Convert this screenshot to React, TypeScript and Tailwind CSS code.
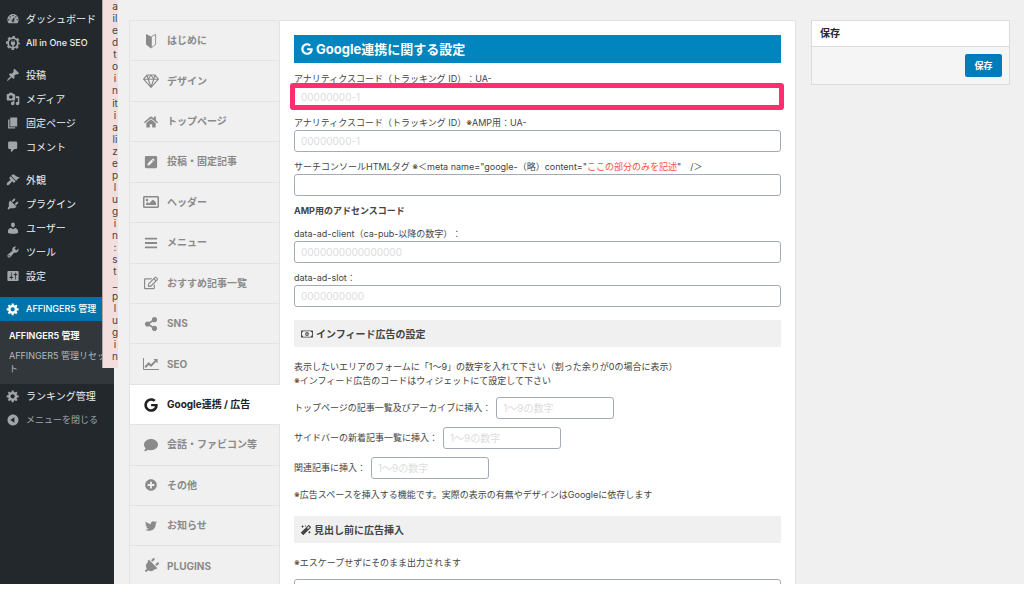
import React from 'react';
import {
  FaBars,
  FaComment,
  FaGoogle,
  FaHome,
  FaMagic,
  FaPenSquare,
  FaPlug,
  FaPlusCircle,
  FaRegEdit,
  FaRegImage,
  FaRegMoneyBillAlt,
  FaShareAlt,
  FaTwitter,
} from 'react-icons/fa';

interface MenuItem {
  label: string;
  path: string;
}

interface Tab {
  label: string;
  icon: React.ReactNode;
  active?: boolean;
}

const icons = {
  dashboard:
    'M3.76 16h12.48c1.1-1.37 1.76-3.11 1.76-5 0-4.42-3.58-8-8-8s-8 3.58-8 8c0 1.89.66 3.63 1.76 5zM10 4c.55 0 1 .45 1 1s-.45 1-1 1-1-.45-1-1 .45-1 1-1zM6 6c.55 0 1 .45 1 1s-.45 1-1 1-1-.45-1-1 .45-1 1-1zm8 0c.55 0 1 .45 1 1s-.45 1-1 1-1-.45-1-1 .45-1 1-1zm-5.37 5.55L12 7v6c0 1.1-.9 2-2 2s-2-.9-2-2c0-.57.24-1.08.63-1.45zM4 10c.55 0 1 .45 1 1s-.45 1-1 1-1-.45-1-1 .45-1 1-1zm12 0c.55 0 1 .45 1 1s-.45 1-1 1-1-.45-1-1 .45-1 1-1zm-5 3c0-.55-.45-1-1-1s-1 .45-1 1 .45 1 1 1 1-.45 1-1z',
  post: 'M10.44 3.02l1.82-1.82 6.36 6.35-1.83 1.82c-1.05-.68-2.48-.57-3.41.36l-.75.75c-.92.93-1.04 2.35-.35 3.41l-1.83 1.82-2.41-2.41-2.8 2.79c-.42.42-3.38 2.71-3.8 2.29s1.86-3.39 2.28-3.81l2.79-2.79L4.1 9.36l1.83-1.82c1.05.69 2.48.57 3.4-.36l.75-.75c.93-.92 1.05-2.35.36-3.41z',
  media:
    'M13 11V4c0-.55-.45-1-1-1h-1.67L9 1H5L3.67 3H2c-.55 0-1 .45-1 1v7c0 .55.45 1 1 1h10c.55 0 1-.45 1-1zM7 4.5c1.38 0 2.5 1.12 2.5 2.5S8.38 9.5 7 9.5 4.5 8.38 4.5 7 5.62 4.5 7 4.5zM14 6h5v10.5c0 1.38-1.12 2.5-2.5 2.5S14 17.88 14 16.5s1.12-2.5 2.5-2.5c.17 0 .34.02.5.05V9h-3V6zm-4 8.05V13h2v3.5c0 1.38-1.12 2.5-2.5 2.5S7 17.88 7 16.5 8.12 14 9.5 14c.17 0 .34.02.5.05z',
  page: 'M6 15V2h10v13H6zm-1 1h8v2H3V5h2v11z',
  comments: 'M5 2h9c1.1 0 2 .9 2 2v7c0 1.1-.9 2-2 2h-2l-5 5v-5H5c-1.1 0-2-.9-2-2V4c0-1.1.9-2 2-2z',
  appearance:
    'M14.48 11.06L7.41 3.99l1.5-1.5c.5-.56 2.3-.47 3.51.32 1.21.8 1.43 1.28 2.91 2.1 1.18.64 2.45 1.26 4.45.85zm-.71.71L6.7 4.7 4.93 6.47c-.39.39-.39 1.02 0 1.41l1.06 1.06c.39.39.39 1.03 0 1.42-.6.6-1.43 1.11-2.21 1.69-.35.26-.7.53-1.01.84C1.43 14.23.4 16.08 1.4 17.07c.99 1 2.84-.03 4.18-1.36.31-.31.58-.66.85-1.02.57-.78 1.08-1.61 1.69-2.21.39-.39 1.02-.39 1.41 0l1.06 1.06c.39.39 1.02.39 1.41 0z',
  plugins:
    'M13.11 4.36L9.87 7.6 8 5.73l3.24-3.24c.35-.34 1.05-.2 1.56.32.52.51.66 1.21.31 1.55zm-8 1.77l.91-1.12 9.01 9.01-1.19.84c-.71.71-2.63 1.16-3.82 1.16H6.14L4.9 17.26c-.59.59-1.54.59-2.12 0-.59-.58-.59-1.53 0-2.12l1.24-1.24v-3.88c0-1.13.4-3.19 1.09-3.89zm7.26 3.97l3.24-3.24c.34-.35 1.04-.21 1.55.31.52.51.66 1.21.31 1.55l-3.24 3.25z',
  users:
    'M10 9.25c-2.27 0-2.73-3.44-2.73-3.44C7 4.02 7.82 2 9.97 2c2.16 0 2.98 2.02 2.71 3.81 0 0-.41 3.44-2.68 3.44zm0 2.57L12.72 10c2.39 0 4.52 2.33 4.52 4.53v2.49s-3.65 1.13-7.24 1.13c-3.65 0-7.24-1.13-7.24-1.13v-2.49c0-2.25 1.94-4.48 4.47-4.48z',
  tools:
    'M16.68 9.77c-1.34 1.34-3.3 1.67-4.95.99l-5.41 6.52c-.99.99-2.59.99-3.58 0s-.99-2.59 0-3.57l6.52-5.42c-.68-1.65-.35-3.61.99-4.95 1.28-1.28 3.12-1.62 4.72-1.06l-2.89 2.89 2.82 2.82 2.86-2.87c.53 1.58.18 3.39-1.08 4.65zM3.81 16.21c.4.39 1.04.39 1.43 0 .4-.4.4-1.04 0-1.43-.39-.4-1.03-.4-1.43 0-.39.39-.39 1.03 0 1.43z',
  settings:
    'M18 16V4c0-.55-.45-1-1-1H3c-.55 0-1 .45-1 1v12c0 .55.45 1 1 1h14c.55 0 1-.45 1-1zM8 11h1c.55 0 1 .45 1 1s-.45 1-1 1H8v1.5c0 .28-.22.5-.5.5s-.5-.22-.5-.5V13H6c-.55 0-1-.45-1-1s.45-1 1-1h1V5.5c0-.28.22-.5.5-.5s.5.22.5.5V11zm5-2h-1c-.55 0-1-.45-1-1s.45-1 1-1h1V5.5c0-.28.22-.5.5-.5s.5.22.5.5V7h1c.55 0 1 .45 1 1s-.45 1-1 1h-1v5.5c0 .28-.22.5-.5.5s-.5-.22-.5-.5V9z',
  generic:
    'M18 12h-2.18c-.17.7-.44 1.35-.81 1.93l1.54 1.54-2.1 2.1-1.54-1.54c-.58.36-1.23.63-1.91.79V19H8v-2.18c-.68-.16-1.33-.43-1.91-.79l-1.54 1.54-2.12-2.12 1.54-1.54c-.36-.58-.63-1.23-.79-1.91H1V9.03h2.17c.16-.7.44-1.35.8-1.94L2.43 5.55l2.1-2.1 1.54 1.54c.58-.37 1.24-.64 1.93-.81V2h3v2.18c.68.16 1.33.43 1.91.79l1.54-1.54 2.12 2.12-1.54 1.54c.36.59.64 1.24.8 1.94H18V12zm-8.5 1.5c1.66 0 3-1.34 3-3s-1.34-3-3-3-3 1.34-3 3 1.34 3 3 3z',
  collapse:
    'M10 2.16c4.33 0 7.84 3.51 7.84 7.84s-3.51 7.84-7.84 7.84S2.16 14.33 2.16 10 5.71 2.16 10 2.16zm2 11.72V6.12L6.18 9.97z',
};

const contentMenu: MenuItem[] = [
  { label: '投稿', path: icons.post },
  { label: 'メディア', path: icons.media },
  { label: '固定ページ', path: icons.page },
  { label: 'コメント', path: icons.comments },
];

const adminMenu: MenuItem[] = [
  { label: '外観', path: icons.appearance },
  { label: 'プラグイン', path: icons.plugins },
  { label: 'ユーザー', path: icons.users },
  { label: 'ツール', path: icons.tools },
  { label: '設定', path: icons.settings },
];

// The notice is squeezed so narrow that it wraps after every letter or two
const noticeLines = [
  'a', 'il', 'e', 'd', 't', 'o', 'i', 'n', 'it', 'i', 'a', 'li', 'z', 'e', 'p',
  'l', 'u', 'g', 'i', 'n', ':', 's', 't', '_', 'p', 'l', 'u', 'g', 'i', 'n',
];

const DashIcon = ({ path }: { path: string }) => (
  <svg viewBox="0 0 20 20" className="size-3.5 shrink-0" fill="currentColor" fillRule="evenodd" aria-hidden="true">
    <path d={path} />
  </svg>
);

const SeoGearIcon = () => (
  <svg viewBox="0 0 20 20" className="size-3.5 shrink-0" fill="none" stroke="currentColor" aria-hidden="true">
    <circle cx="10" cy="10" r="7" strokeWidth="2.6" />
    <circle cx="10" cy="10" r="8.8" strokeWidth="2.4" strokeDasharray="3.8 3.11" strokeDashoffset="1.9" />
    <path d="M7 8.5h6v2.2a3 3 0 0 1-2 2.6v2.5H9v-2.5a3 3 0 0 1-2-2.6z" fill="currentColor" stroke="none" />
    <path d="M8.5 9V6.3M11.5 9V6.3" strokeWidth="1.3" />
  </svg>
);

const BeginnerIcon = () => (
  <svg viewBox="0 0 16 16" className="size-4" aria-hidden="true">
    <path d="M3 1l5 2.5v12L3 11.5z" fill="currentColor" />
    <path d="M8.4 3.6L12.6 1.4v9.9L8.4 14.8z" fill="none" stroke="currentColor" strokeWidth="0.9" />
  </svg>
);

const DiamondIcon = () => (
  <svg viewBox="0 0 16 16" className="size-4" fill="none" stroke="currentColor" strokeWidth="1.1" strokeLinejoin="round" aria-hidden="true">
    <path d="M4 2h8l3.4 4.2L8 14.4.6 6.2zM.8 6.2h14.4M4 2l1.2 4.2L8 14l2.8-7.8L12 2M5.2 6.2L8 2l2.8 4.2" />
  </svg>
);

const ChartIcon = () => (
  <svg viewBox="0 0 16 16" className="size-4" fill="none" stroke="currentColor" aria-hidden="true">
    <path d="M.5 2v11.5H16" strokeWidth="1" />
    <path d="M2.2 11.2l3.6-3.7 2.2 2.2 4.8-4.8" strokeWidth="2" />
    <path d="M10.4 3h4.2v4.2z" fill="currentColor" stroke="none" />
  </svg>
);

const tabs: Tab[] = [
  { label: 'はじめに', icon: <BeginnerIcon /> },
  { label: 'デザイン', icon: <DiamondIcon /> },
  { label: 'トップページ', icon: <FaHome /> },
  { label: '投稿・固定記事', icon: <FaPenSquare /> },
  { label: 'ヘッダー', icon: <FaRegImage className="size-4" /> },
  { label: 'メニュー', icon: <FaBars /> },
  { label: 'おすすめ記事一覧', icon: <FaRegEdit /> },
  { label: 'SNS', icon: <FaShareAlt /> },
  { label: 'SEO', icon: <ChartIcon /> },
  { label: 'Google連携 / 広告', icon: <FaGoogle />, active: true },
  { label: '会話・ファビコン等', icon: <FaComment /> },
  { label: 'その他', icon: <FaPlusCircle className="size-3" /> },
  { label: 'お知らせ', icon: <FaTwitter className="size-3" /> },
  { label: 'PLUGINS', icon: <FaPlug className="size-4 rotate-45" /> },
];

const MenuLink = ({ label, path }: MenuItem) => (
  <a href="#" className="flex h-6 items-center gap-1.5 pl-1.5 whitespace-nowrap text-[#eee]">
    <span className="text-[#a0a5aa]">
      <DashIcon path={path} />
    </span>
    {label}
  </a>
);

const inputClass =
  'block h-[22px] rounded-[3px] border border-[#a5abb5] bg-white px-1.5 text-[10px] leading-4 text-[#444] outline-none placeholder:text-[#dcdcdc]';

interface FieldProps {
  id: string;
  label: React.ReactNode;
  placeholder?: string;
  highlight?: boolean;
}

const Field = ({ id, label, placeholder, highlight }: FieldProps) => (
  <div>
    <label htmlFor={id} className="block h-3.5 whitespace-nowrap">
      {label}
    </label>
    <div className="relative">
      <input id={id} type="text" placeholder={placeholder} className={`${inputClass} w-full`} />
      {highlight && (
        <div className="pointer-events-none absolute -top-[3px] -right-[3px] -bottom-[2px] -left-1 rounded-[3px] border-[5px] border-[#ff2e6f]" />
      )}
    </div>
  </div>
);

const InlineField = ({ id, label }: { id: string; label: string }) => (
  <div className="flex items-center gap-[5px]">
    <label htmlFor={id} className="whitespace-nowrap">
      {label}
    </label>
    <input id={id} type="text" placeholder="1〜9の数字" className={`${inputClass} w-[118px]`} />
  </div>
);

const SectionTitle = ({ icon, children }: { icon: React.ReactNode; children: React.ReactNode }) => (
  <h3 className="flex h-[27px] items-center gap-[3px] bg-[#f0f0f0] px-[7px] text-[10px] font-bold">
    {icon}
    {children}
  </h3>
);

const Sidebar = () => (
  <nav className="w-[114px] shrink-0 bg-[#23282d] pt-[7px] text-[10px] leading-4">
    <MenuLink label="ダッシュボード" path={icons.dashboard} />
    <a href="#" className="flex h-6 items-center gap-1.5 pl-1.5 text-[9px] font-medium whitespace-nowrap text-[#eee]">
      <span className="text-[#a0a5aa]">
        <SeoGearIcon />
      </span>
      All in One SEO
    </a>
    <div className="mt-2">
      {contentMenu.map((item) => (
        <MenuLink key={item.label} {...item} />
      ))}
    </div>
    <div className="mt-[9px]">
      {adminMenu.map((item) => (
        <MenuLink key={item.label} {...item} />
      ))}
    </div>
    <div className="mt-[9px]">
      <a href="#" className="flex h-6 items-center gap-1.5 bg-[#0073aa] pl-1.5 text-[9px] font-medium whitespace-nowrap text-white">
        <DashIcon path={icons.generic} />
        AFFINGER5 管理
      </a>
      <ul className="h-[63px] bg-[#32373c] pt-2 pr-2 pl-[9px] text-[9px] leading-[13px] text-[#b4b9be]">
        <li className="mb-[7px]">
          <a href="#" className="font-semibold text-white">AFFINGER5 管理</a>
        </li>
        <li>
          <a href="#">AFFINGER5 管理リセット</a>
        </li>
      </ul>
      <MenuLink label="ランキング管理" path={icons.generic} />
      <button type="button" className="flex h-6 items-center gap-1.5 pl-1.5 text-[9px] whitespace-nowrap text-[#a0a5aa]">
        <DashIcon path={icons.collapse} />
        メニューを閉じる
      </button>
    </div>
  </nav>
);

const App: React.FC = () => {
  return (
    <div className="h-screen overflow-hidden bg-white pb-[15px] font-['Inter','Noto_Sans_CJK_JP',sans-serif] text-[#444] [text-spacing-trim:space-all]">
      <div className="relative flex h-full overflow-hidden bg-[#f0f0f0]">
        <Sidebar />

        {/* Plugin error notice spilling over the admin menu */}
        <div className="absolute top-0 left-[102px] flex h-[368px] w-4 flex-col justify-between border-l border-[#b9a3a8] bg-[#f2dede] pb-1.5 pl-[9px] text-center text-[10px] leading-3">
          {noticeLines.map((line, i) => (
            <span key={i}>{line}</span>
          ))}
        </div>

        <main className="flex min-w-0 flex-1 items-start pt-5 pr-3.5 pl-[15px]">
          {/* Tabs */}
          <div className="flex h-[567px] w-[151px] shrink-0 flex-col border-t border-l border-[#e3e3e3]">
            {tabs.map(({ label, icon, active }) => (
              <a
                key={label}
                href="#"
                className={`flex flex-1 items-center border-b border-[#e3e3e3] pl-3 text-[10px] font-bold whitespace-nowrap ${
                  active ? 'bg-white text-[#222]' : 'border-r text-[#8a8a8a]'
                }`}
              >
                <span className="mr-[7px] flex w-[18px] justify-center text-[14px]">{icon}</span>
                {label}
              </a>
            ))}
          </div>

          {/* Settings panel */}
          <section className="min-w-0 flex-1 border-t border-r border-[#e3e3e3] bg-white px-3.5 pt-3.5 text-[9px] leading-[14px]">
            <h2 className="flex h-7 items-center gap-[3px] bg-[#0085be] px-[7px] text-[13px] font-bold text-white">
              <FaGoogle className="size-3" />
              Google連携に関する設定
            </h2>

            <form className="mt-[9px]">
              <div className="flex flex-col gap-2">
                <Field id="ga" label="アナリティクスコード（トラッキング ID）：UA-" placeholder="00000000-1" highlight />
                <Field id="ga-amp" label="アナリティクスコード（トラッキング ID）※AMP用：UA-" placeholder="00000000-1" />
                <Field
                  id="search-console"
                  label={
                    <>
                      サーチコンソールHTMLタグ ※＜meta name="google-（略）content="
                      <span className="text-[#ff4b3e]">ここの部分のみを記述</span>"　/＞
                    </>
                  }
                />
              </div>

              <h4 className="mt-2 mb-[9px] font-bold">AMP用のアドセンスコード</h4>

              <div className="flex flex-col gap-2">
                <Field id="ad-client" label="data-ad-client（ca-pub-以降の数字）：" placeholder="0000000000000000" />
                <Field id="ad-slot" label="data-ad-slot：" placeholder="0000000000" />
              </div>

              <div className="my-[13px]">
                <SectionTitle icon={<FaRegMoneyBillAlt className="size-3" />}>インフィード広告の設定</SectionTitle>
              </div>

              <p>
                表示したいエリアのフォームに「1〜9」の数字を入れて下さい（割った余りが0の場合に表示）
                <br />
                ※インフィード広告のコードはウィジェットにて設定して下さい
              </p>

              <div className="my-[9px] flex flex-col gap-2">
                <InlineField id="infeed-top" label="トップページの記事一覧及びアーカイブに挿入：" />
                <InlineField id="infeed-side" label="サイドバーの新着記事一覧に挿入：" />
                <InlineField id="infeed-related" label="関連記事に挿入：" />
              </div>

              <p>※広告スペースを挿入する機能です。実際の表示の有無やデザインはGoogleに依存します</p>

              <div className="mt-3.5 mb-[13px]">
                <SectionTitle icon={<FaMagic className="size-2.5" />}>見出し前に広告挿入</SectionTitle>
              </div>

              <label htmlFor="before-heading" className="block">
                ※エスケープせずにそのまま出力されます
              </label>
              <textarea
                id="before-heading"
                rows={4}
                className="mt-[9px] block w-full rounded-[3px] border border-[#a5abb5] bg-white px-1.5 outline-none"
              />
            </form>
          </section>

          {/* Save box */}
          <aside className="ml-[15px] w-[199px] shrink-0 border border-[#dcdcdc] bg-[#f5f5f5]">
            <h2 className="flex h-[26px] items-center border-b border-[#dcdcdc] bg-white px-2 text-[10px] font-bold text-[#23282d]">
              保存
            </h2>
            <div className="flex justify-end px-[7px] py-[7px]">
              <button type="submit" className="h-[23px] w-[37px] rounded-[2px] bg-[#007cba] text-[9px] font-semibold text-white">
                保存
              </button>
            </div>
          </aside>
        </main>
      </div>
    </div>
  );
};

export default App;
